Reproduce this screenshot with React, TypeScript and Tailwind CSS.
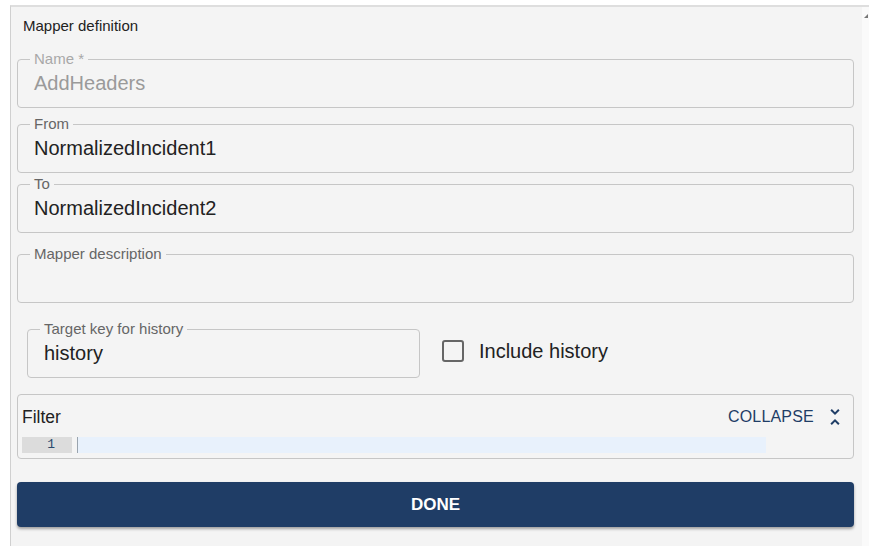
import React from "react";

const sans = "font-['Liberation_Sans',Arial,sans-serif]";

interface FieldProps {
  label: string;
  value?: string;
  disabled?: boolean;
  className?: string;
}

function OutlinedField({ label, value, disabled, className = "" }: FieldProps) {
  return (
    <fieldset
      className={`border border-[#c6c6c6] rounded-[4px] px-[12px] m-0 min-w-0 ${className}`}
    >
      <legend
        className={`px-[4px] text-[15px] leading-[16px] ${
          disabled ? "text-[#a8a8a8]" : "text-[#666]"
        }`}
      >
        {label}
      </legend>
      <div
        className={`pl-[4px] pt-[4px] pb-[12px] h-[40px] text-[20px] leading-[24px] ${
          disabled ? "text-[#9a9a9a]" : "text-[#222]"
        }`}
      >
        {value}
      </div>
    </fieldset>
  );
}

function UnfoldLess() {
  return (
    <svg width="24" height="24" viewBox="0 0 24 24" fill="#1f3d66">
      <path d="M7.41 18.59 8.83 20 12 16.83 15.17 20l1.41-1.41L12 14zm9.18-13.18L15.17 4 12 7.17 8.83 4 7.41 5.41 12 10z" />
    </svg>
  );
}

export default function App() {
  return (
    <div className={`w-[869px] h-[546px] bg-white overflow-hidden ${sans}`}>
      <div className="mt-[5px] ml-[10px] h-[541px] flex border-t-2 border-l border-t-[#dedede] border-l-[#d0d0d0]">
        {/* Form panel */}
        <div className="flex-1 bg-[#f4f4f4] pl-[6px] pr-[8px] flex flex-col">
          <div className="pt-[9px] pl-[6px] h-[28px] text-[15px] leading-[20px] text-[#222]">
            Mapper definition
          </div>

          <OutlinedField className="mt-[16px]" label="Name *" value="AddHeaders" disabled />
          <OutlinedField className="mt-[8px]" label="From" value="NormalizedIncident1" />
          <OutlinedField className="mt-[3px]" label="To" value="NormalizedIncident2" />
          <OutlinedField className="mt-[13px]" label="Mapper description" value="" />

          <div className="mt-[18px] pl-[10px] flex items-center">
            <OutlinedField className="w-[393px] shrink-0" label="Target key for history" value="history" />
            <label className="ml-[22px] mt-[2px] flex items-center text-[20px] leading-[24px] text-[#222]">
              <span className="w-[22px] h-[22px] border-[2.5px] border-[#666] rounded-[3px] bg-transparent" />
              <span className="ml-[15px]">Include history</span>
            </label>
          </div>

          {/* Filter editor */}
          <div className="mt-[16px] h-[65px] border border-[#c6c6c6] rounded-[4px] pl-[4px] pr-[6px] pt-[2px]">
            <div className="h-[40px] flex items-center justify-between">
              <span className="text-[17.5px] text-[#222]">Filter</span>
              <button className="flex items-center text-[16px] tracking-[0.2px] text-[#1f3d66]">
                COLLAPSE
                <span className="ml-[9px] flex">
                  <UnfoldLess />
                </span>
              </button>
            </div>
            <div className="h-[16px] flex">
              <div className="w-[50px] bg-[#dcdcdc] text-right pr-[17px] font-['Liberation_Mono',monospace] text-[13px] leading-[16px] text-[#2b4a6e]">
                1
              </div>
              <div className="w-[689px] ml-[5px] bg-[#e8f1fc] border-l border-l-[#9aa4ae]" />
            </div>
          </div>

          <button className="mt-[23px] h-[45px] w-full rounded-[4px] bg-[#1f3d66] text-white font-bold text-[17px] shadow-[0_2px_3px_rgba(0,0,0,0.35)]">
            DONE
          </button>
        </div>

        {/* Scrollbar */}
        <div className="w-[7px] bg-[#fafafa] relative">
          <div className="absolute top-[7px] left-[2px] w-0 h-0 border-l-[4px] border-l-transparent border-b-[4px] border-b-[#777]" />
        </div>
      </div>
    </div>
  );
}
